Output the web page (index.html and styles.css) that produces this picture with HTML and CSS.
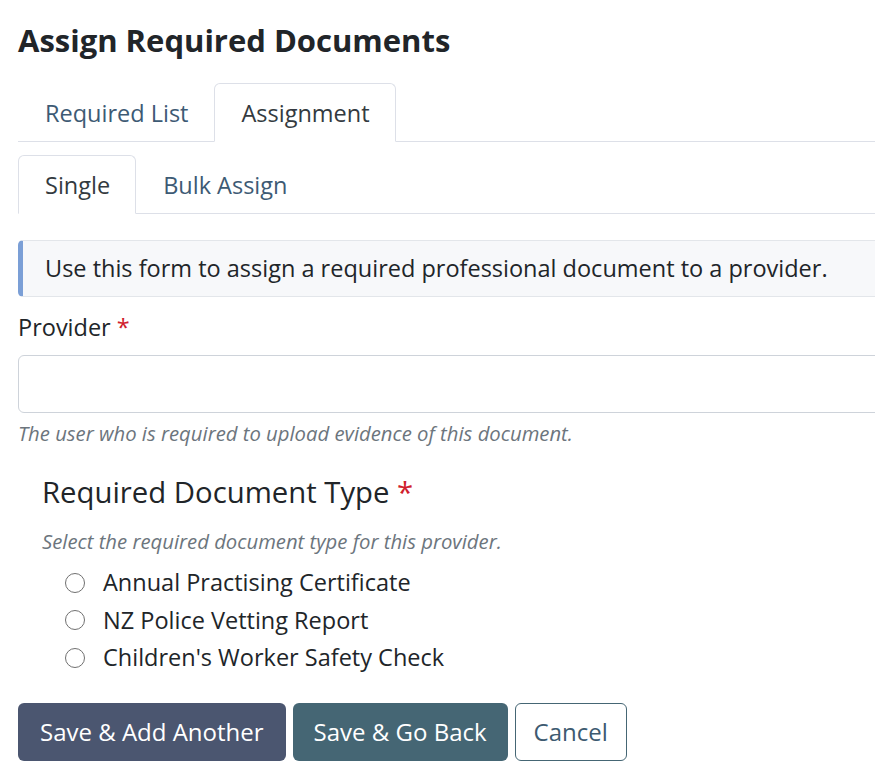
FILE: index.html
```html
<!DOCTYPE html>
<html lang="en">
<head>
  <meta charset="UTF-8" />
  <title>Assign Required Documents</title>
  <link rel="stylesheet" href="styles.css">
</head>
<body>

<div class="page">
  <h1 class="page-title">Assign Required Documents</h1>

  <!-- main tabs -->
  <ul class="tabs">
    <li><a href="#">Required List</a></li>
    <li class="active"><a href="#">Assignment</a></li>
  </ul>

  <!-- sub tabs -->
  <ul class="tabs sub-tabs">
    <li class="active"><a href="#">Single</a></li>
    <li><a href="#">Bulk Assign</a></li>
  </ul>

  <div class="info-box">Use this form to assign a required professional document to a provider.</div>

  <form>
    <div class="form-group">
      <label for="provider">Provider <span class="req">*</span></label>
      <input type="text" id="provider" class="form-control" />
      <div class="help">The user who is required to upload evidence of this document.</div>
    </div>

    <fieldset class="doc-type">
      <legend>Required Document Type <span class="req">*</span></legend>
      <div class="help">Select the required document type for this provider.</div>
      <div class="radio-list">
        <label class="radio"><input type="radio" name="doctype" /> Annual Practising Certificate</label>
        <label class="radio"><input type="radio" name="doctype" /> NZ Police Vetting Report</label>
        <label class="radio"><input type="radio" name="doctype" /> Children's Worker Safety Check</label>
      </div>
    </fieldset>

    <div class="actions">
      <button type="submit" class="btn btn-dark">Save &amp; Add Another</button>
      <button type="submit" class="btn btn-teal">Save &amp; Go Back</button>
      <button type="button" class="btn btn-outline">Cancel</button>
    </div>
  </form>
</div>

</body>
</html>
```

FILE: styles.css
```css
* {
  box-sizing: border-box;
}

body {
  margin: 0;
  font-family: "Open Sans", "Noto Sans", sans-serif;
  font-size: 23.5px;
  color: #212529;
  background: #fff;
  overflow: hidden;
}

.page {
  width: 1000px;
  padding: 0 0 0 18px;
}

.page-title {
  font-size: 31px;
  font-weight: 700;
  line-height: 40px;
  margin: 20px 0 23px;
}

/* tabs */
.tabs {
  list-style: none;
  margin: 0;
  padding: 0;
  display: flex;
  border-bottom: 1px solid #dde0e8;
}

.tabs li {
  margin-bottom: -1px;
}

.tabs a {
  display: block;
  padding: 11px 25px 10px 26px;
  line-height: 36px;
  color: #3d5a74;
  text-decoration: none;
  border: 1px solid transparent;
  border-radius: 6px 6px 0 0;
}

.tabs li.active a {
  color: #333a40;
  background: #fff;
  border-color: #dde0e8 #dde0e8 #fff;
}

.sub-tabs {
  margin-top: 13px;
}

/* info box */
.info-box {
  margin-top: 26px;
  padding: 10px 20px 10px 22px;
  line-height: 35px;
  background: #f7f8fa;
  border: 1px solid #e3e6ea;
  border-left: 5px solid #7b9fd6;
  border-radius: 5px 0 0 5px;
}

/* form */
.form-group {
  margin-top: 12px;
}

.form-group label {
  display: block;
  line-height: 36px;
  margin-bottom: 10px;
}

.req {
  color: #d0202c;
}

.form-control {
  display: block;
  width: 100%;
  height: 58px;
  padding: 10px 16px;
  font: inherit;
  border: 1px solid #ced3da;
  border-radius: 6px;
}

.help {
  font-style: italic;
  font-size: 20.3px;
  color: #6c757d;
  line-height: 28px;
  margin-top: 6px;
}

.doc-type {
  border: none;
  margin: 25px 0 0;
  padding: 0 0 0 24px;
}

.doc-type legend {
  padding: 0;
  font-size: 29.3px;
  line-height: 40px;
}

.doc-type .help {
  margin-top: 15px;
}

.radio-list {
  padding-left: 23px;
  margin-top: 9px;
}

.radio {
  display: flex;
  align-items: center;
  gap: 18px;
  line-height: 37.5px;
}

.radio input {
  appearance: none;
  width: 20px;
  height: 20px;
  margin: 0;
  border: 1.5px solid #707070;
  border-radius: 50%;
  background: #fff;
}

/* buttons */
.actions {
  display: flex;
  gap: 7px;
  margin-top: 26px;
}

.btn {
  font: inherit;
  font-size: 24px;
  height: 58px;
  padding: 0 21px;
  border-radius: 6px;
  border: 1px solid transparent;
  color: #fff;
  cursor: pointer;
}

.btn-dark {
  background: #4b5670;
}

.btn-teal {
  background: #456674;
  padding: 0 20px;
}

.btn-outline {
  background: #fff;
  color: #3d5a70;
  border-color: #456674;
  padding: 0 18px;
}
```
